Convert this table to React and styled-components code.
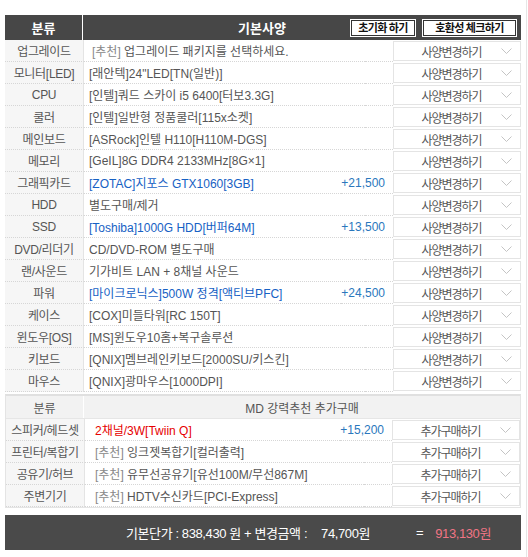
import React from "react";
import styled, { createGlobalStyle } from "styled-components";

const Global = createGlobalStyle`
  html, body { margin: 0; padding: 0; background: #fff; }
  body { font-family: "Liberation Sans", "Noto Sans CJK KR", sans-serif; font-size: 12px; color: #555; }
`;

const Page = styled.div`
  width: 521px;
  padding: 15px 0 8px 5px;
  border-right: 1px solid #e6e6e6;
  box-sizing: content-box;
  margin-right: 1px;
`;

const Main = styled.div`
  width: 516px;
  display: flex;
  flex-direction: column;
`;

const HeaderBar = styled.div`
  display: grid;
  grid-template-columns: 78px 1fr;
  height: 25px;
  background: #474747;
  color: #fff;
  font-weight: bold;
  font-size: 13px;
  font-family: "Noto Sans CJK KR", sans-serif;
`;

const HeadCat = styled.div`
  display: flex;
  align-items: center;
  justify-content: center;
  border-right: 1px solid #fff;
`;

const HeadMain = styled.div`
  display: flex;
  align-items: center;
  padding-right: 4px;
`;

const HeadTitle = styled.div`
  margin-left: 155px;
  flex: 1;
`;

const HeadButton = styled.div`
  height: 16px;
  width: ${(p) => p.$w}px;
  margin-left: ${(p) => p.$ml}px;
  background: #fff;
  border: 1px solid #fff;
  box-shadow: inset 0 0 0 1px #333;
  color: #111;
  font-size: 11px;
  font-weight: bold;
  letter-spacing: -0.6px;
  display: flex;
  align-items: center;
  justify-content: center;
  line-height: 1;
  white-space: nowrap;
`;

const Section = styled.div`
  display: flex;
  flex-direction: column;
  ${(p) =>
    p.$boxed &&
    `border: 1px solid #e4e4e4; border-top: 2px solid #e0e0e0; margin-top: 2px;`}
`;

const SubHeader = styled.div`
  display: grid;
  grid-template-columns: 78px 1fr;
  height: 22px;
  background: #f2f2f2;
  color: #555;
  font-size: 12px;
  border-bottom: 1px solid #e6e6e6;
`;

const SubCat = styled.div`
  display: flex;
  align-items: center;
  justify-content: center;
  border-right: 1px solid #fff;
`;

const SubTitle = styled.div`
  display: flex;
  align-items: center;
  justify-content: center;
`;

const Row = styled.div`
  display: grid;
  grid-template-columns: 79px 1fr auto 128px;
  height: 22px;
`;

const Cat = styled.div`
  background: #f6f6f6;
  border-right: 1px solid #e4e4e4;
  border-bottom: 1px dotted #d6d6d6;
  display: flex;
  align-items: center;
  justify-content: center;
  white-space: nowrap;
  color: #555;
  letter-spacing: -0.3px;
`;

const Content = styled.div`
  border-bottom: 1px dotted #d6d6d6;
  display: flex;
  align-items: center;
  padding-left: ${(p) => p.$pad}px;
  white-space: pre;
  overflow: hidden;
  color: ${(p) => (p.$tone === "blue" ? "#1661c4" : p.$tone === "red" ? "#e60000" : "#555")};
`;

const Rec = styled.span`
  color: #888;
`;

const Price = styled.div`
  border-bottom: 1px dotted #d6d6d6;
  display: flex;
  align-items: center;
  justify-content: flex-end;
  padding-right: 8px;
  color: #2a77bd;
  min-width: 20px;
`;

const SelectCell = styled.div`
  display: flex;
  align-items: center;
  padding: 1px 0;
  box-sizing: border-box;
`;

const SelectBox = styled.div`
  width: 100%;
  height: 20px;
  border: 1px solid #e4e4e4;
  box-sizing: border-box;
  display: flex;
  align-items: center;
  padding: 0 8px 0 8px;
  background: #fff;
  color: #555;
  font-size: 12px;
  letter-spacing: -1px;
  font-family: "Noto Sans CJK KR", sans-serif;
`;

const SelectText = styled.span`
  flex: 1;
  text-align: center;
`;

const Footer = styled.div`
  margin-top: 7px;
  height: 35px;
  background: #4a4a4a;
  color: #fff;
  font-size: 13px;
  letter-spacing: -0.4px;
  display: flex;
  align-items: center;
  justify-content: flex-end;
  padding-right: 30px;
  white-space: pre;
`;

const FootPart = styled.span`
  margin-left: ${(p) => p.$ml || 0}px;
  color: ${(p) => (p.$pink ? "#f07585" : "#fff")};
`;

const Chevron = () => (
  <svg width="11" height="6" viewBox="0 0 11 6">
    <polyline points="0.5,0.5 5.5,5.5 10.5,0.5" fill="none" stroke="#c4c4c4" strokeWidth="1" />
  </svg>
);

const Select = ({ label }) => (
  <SelectCell>
    <SelectBox>
      <SelectText>{label}</SelectText>
      <Chevron />
    </SelectBox>
  </SelectCell>
);

const base = [
  { cat: "업그레이드", rec: true, text: " 업그레이드 패키지를 선택하세요.", pad: 8 },
  { cat: "모니터[LED]", text: "[래안텍]24\"LED[TN(일반)]" },
  { cat: "CPU", text: "[인텔]쿼드 스카이 i5 6400[터보3.3G]" },
  { cat: "쿨러", text: "[인텔]일반형 정품쿨러[115x소켓]" },
  { cat: "메인보드", text: "[ASRock]인텔 H110[H110M-DGS]" },
  { cat: "메모리", text: "[GeIL]8G DDR4 2133MHz[8G×1]" },
  { cat: "그래픽카드", text: "[ZOTAC]지포스 GTX1060[3GB]", tone: "blue", price: "+21,500" },
  { cat: "HDD", text: "별도구매/제거" },
  { cat: "SSD", text: "[Toshiba]1000G HDD[버퍼64M]", tone: "blue", price: "+13,500" },
  { cat: "DVD/리더기", text: "CD/DVD-ROM 별도구매" },
  { cat: "랜/사운드", text: "기가비트 LAN + 8채널 사운드" },
  { cat: "파워", text: "[마이크로닉스]500W 정격[액티브PFC]", tone: "blue", price: "+24,500" },
  { cat: "케이스", text: "[COX]미들타워[RC 150T]" },
  { cat: "윈도우[OS]", text: "[MS]윈도우10홈+복구솔루션" },
  { cat: "키보드", text: "[QNIX]멤브레인키보드[2000SU/키스킨]" },
  { cat: "마우스", text: "[QNIX]광마우스[1000DPI]" },
];

const extra = [
  { cat: "스피커/헤드셋", text: "2채널/3W[Twiin Q]", tone: "red", price: "+15,200" },
  { cat: "프린터/복합기", rec: true, text: " 잉크젯복합기[컬러출력]" },
  { cat: "공유기/허브", rec: true, text: " 유무선공유기[유선100M/무선867M]" },
  { cat: "주변기기", rec: true, text: " HDTV수신카드[PCI-Express]" },
];

const ItemRow = ({ item, pad, label }) => (
  <Row>
    <Cat>{item.cat}</Cat>
    <Content $tone={item.tone} $pad={item.pad || pad}>
      <span>
        {item.rec && <Rec>[추천]</Rec>}
        {item.text}
      </span>
    </Content>
    <Price>{item.price || ""}</Price>
    <Select label={label} />
  </Row>
);

export default function App() {
  return (
    <>
      <Global />
      <Page>
        <Main>
          <HeaderBar>
            <HeadCat>분류</HeadCat>
            <HeadMain>
              <HeadTitle>기본사양</HeadTitle>
              <HeadButton $w={64} $ml={0}>초기화 하기</HeadButton>
              <HeadButton $w={93} $ml={6}>호환성 체크하기</HeadButton>
            </HeadMain>
          </HeaderBar>
          <Section>
            {base.map((it) => (
              <ItemRow key={it.cat} item={it} pad={5} label="사양변경하기" />
            ))}
          </Section>
          <Section $boxed>
            <SubHeader>
              <SubCat>분류</SubCat>
              <SubTitle>MD 강력추천 추가구매</SubTitle>
            </SubHeader>
            {extra.map((it) => (
              <ItemRow key={it.cat} item={it} pad={10} label="추가구매하기" />
            ))}
          </Section>
          <Footer>
            <FootPart>기본단가 : 838,430 원 + 변경금액 :</FootPart>
            <FootPart $ml={14}>74,700원</FootPart>
            <FootPart $ml={46}>=</FootPart>
            <FootPart $ml={12} $pink>913,130원</FootPart>
          </Footer>
        </Main>
      </Page>
    </>
  );
}
